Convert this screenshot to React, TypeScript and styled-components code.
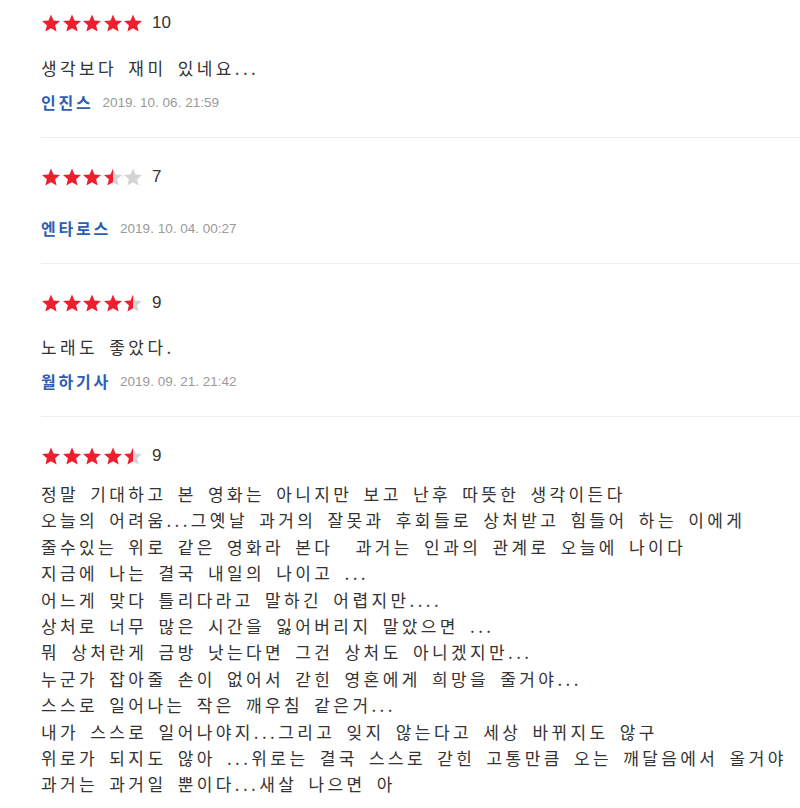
import React from "react";
import styled, { createGlobalStyle } from "styled-components";

const Global = createGlobalStyle`
  html, body { margin: 0; padding: 0; background: #fff; }
  body { font-family: "Noto Sans CJK KR", "Noto Sans", sans-serif; color: #333; }
`;

const List = styled.div`
  display: flex;
  flex-direction: column;
  width: 800px;
  overflow: hidden;
`;

const Item = styled.div<{ $first?: boolean; $last?: boolean }>`
  margin-left: 41px;
  padding: ${(p) => (p.$first ? "13px" : "29px")} 0 25px;
  border-bottom: ${(p) => (p.$last ? "none" : "1px solid #ececec")};
`;

const RatingRow = styled.div`
  display: flex;
  align-items: center;
  height: 20px;
  gap: 9px;
`;

const Stars = styled.div`
  display: flex;
  align-items: center;
  gap: 0.5px;
`;

const Score = styled.span`
  font-family: "Liberation Sans", Arial, sans-serif;
  font-size: 17px;
  color: #333;
  line-height: 20px;
`;

const Comment = styled.div<{ $top: number; $lh: number }>`
  padding-top: ${(p) => p.$top}px;
  padding-bottom: 11px;
  font-size: 17px;
  line-height: ${(p) => p.$lh}px;
  letter-spacing: 3.4px;
  word-spacing: 4px;
  white-space: pre;
  color: #333;
`;

const Meta = styled.div`
  display: flex;
  align-items: center;
  gap: 9px;
  height: 20px;
`;

const Author = styled.span`
  font-family: "Noto Sans CJK KR", sans-serif;
  font-weight: 700;
  font-size: 16px;
  color: #2d5db5;
  letter-spacing: 2.8px;
`;

const DateText = styled.span`
  font-family: "Liberation Sans", Arial, sans-serif;
  font-size: 13.5px;
  color: #9a9a9a;
`;

const STAR =
  "M10 0.6 L12.5 6.5 L19 7 L14.1 11.2 L15.6 17.5 L10 14.2 L4.4 17.5 L5.9 11.2 L1 7 L7.5 6.5 Z";

let gid = 0;

function Star({ kind }: { kind: "full" | "half" | "empty" }) {
  const id = React.useMemo(() => `half-${gid++}`, []);
  const red = "#eb1f2d";
  const gray = "#d3d3d3";
  return (
    <svg width="20" height="18" viewBox="0 0 20 18">
      {kind === "half" && (
        <defs>
          <linearGradient id={id} x1="0" x2="1" y1="0" y2="0">
            <stop offset="0.5" stopColor={red} />
            <stop offset="0.5" stopColor={gray} />
          </linearGradient>
        </defs>
      )}
      <path
        d={STAR}
        fill={kind === "full" ? red : kind === "empty" ? gray : `url(#${id})`}
      />
    </svg>
  );
}

function Rating({ score }: { score: number }) {
  const stars = [0, 1, 2, 3, 4].map((i) => {
    const v = score - i * 2;
    return v >= 2 ? "full" : v >= 1 ? "half" : "empty";
  }) as ("full" | "half" | "empty")[];
  return (
    <RatingRow>
      <Stars>
        {stars.map((k, i) => (
          <Star key={i} kind={k} />
        ))}
      </Stars>
      <Score>{score}</Score>
    </RatingRow>
  );
}

type Review = {
  score: number;
  text: string;
  author: string;
  date: string;
  top: number;
  lh: number;
};

const reviews: Review[] = [
  { score: 10, text: "생각보다 재미 있네요...", author: "인진스", date: "2019. 10. 06. 21:59", top: 22, lh: 26 },
  { score: 7, text: "", author: "엔타로스", date: "2019. 10. 04. 00:27", top: 20, lh: 26 },
  { score: 9, text: "노래도 좋았다.", author: "월하기사", date: "2019. 09. 21. 21:42", top: 21, lh: 26 },
  {
    score: 9,
    text: [
      "정말 기대하고 본 영화는 아니지만 보고 난후 따뜻한 생각이든다",
      "오늘의 어려움...그옛날 과거의 잘못과 후회들로 상처받고 힘들어 하는 이에게",
      "줄수있는 위로 같은 영화라 본다  과거는 인과의 관계로 오늘에 나이다",
      "지금에 나는 결국 내일의 나이고 ...",
      "어느게 맞다 틀리다라고 말하긴 어렵지만....",
      "상처로 너무 많은 시간을 잃어버리지 말았으면 ...",
      "뭐 상처란게 금방 낫는다면 그건 상처도 아니겠지만...",
      "누군가 잡아줄 손이 없어서 갇힌 영혼에게 희망을 줄거야...",
      "스스로 일어나는 작은 깨우침 같은거...",
      "내가 스스로 일어나야지...그리고 잊지 않는다고 세상 바뀌지도 않구",
      "위로가 되지도 않아 ...위로는 결국 스스로 갇힌 고통만큼 오는 깨달음에서 올거야",
      "과거는 과거일 뿐이다...새살 나으면 아",
    ].join("\n"),
    author: "",
    date: "",
    top: 15,
    lh: 26.4,
  },
];

export default function App() {
  return (
    <>
      <Global />
      <List>
        {reviews.map((r, i) => (
          <Item key={i} $first={i === 0} $last={i === reviews.length - 1}>
            <Rating score={r.score} />
            <Comment $top={r.top} $lh={r.lh}>{r.text}</Comment>
            {r.author && (
              <Meta>
                <Author>{r.author}</Author>
                <DateText>{r.date}</DateText>
              </Meta>
            )}
          </Item>
        ))}
      </List>
    </>
  );
}
